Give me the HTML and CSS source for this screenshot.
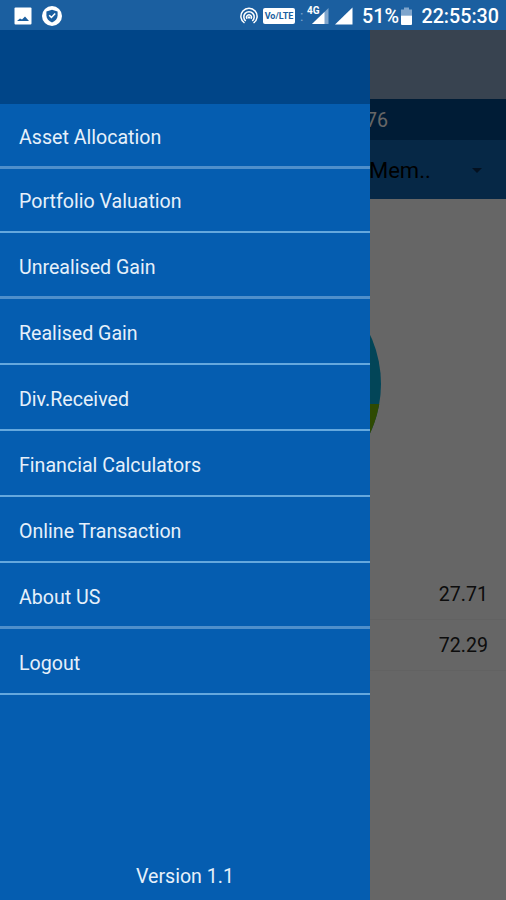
FILE: index.html
```
<!DOCTYPE html>
<html lang="en">
<head>
    <meta charset="UTF-8">
    <meta name="viewport" content="width=device-width, initial-scale=1.0">
    <title>Portfolio</title>
    <link rel="stylesheet" href="styles.css">
</head>
<body>
    <div class="screen">
        <div class="statusbar">
            <svg class="ic-photo" width="18" height="18" viewBox="0 0 18 18">
                <rect x="0.5" y="0.5" width="17" height="17" rx="1" fill="#fff"/>
                <path d="M3 14l3-2.500 2 1 3-3 4 4.500z" fill="#1b5fa0"/>
            </svg>
            <svg class="ic-shield" width="20" height="20" viewBox="0 0 20 20">
                <circle cx="10" cy="10" r="10" fill="#fff"/>
                <path d="M10 3.800l5.600 1.800v3.800c0 3.200-2.400 5.700-5.600 7-3.200-1.300-5.600-3.800-5.600-7V5.600z" fill="#1b5fa0"/>
                <path d="M7.200 9.200l2.200 2.200 3.800-4" fill="none" stroke="#fff" stroke-width="1.500"/>
            </svg>
            <svg class="ic-hotspot" width="18" height="18" viewBox="0 0 18 18">
                <g fill="none" stroke="#fff" stroke-width="1.500">
                    <path d="M4.500 16A8.100 8.100 0 1 1 13.500 16"/>
                    <path d="M5.800 14A5.200 5.200 0 1 1 12.200 14"/>
                    <path d="M7.200 11.800A2.400 2.400 0 1 1 10.800 11.800"/>
                </g>
                <circle cx="9" cy="10.400" r="1.200" fill="#fff"/>
            </svg>
            <span class="volte">Vo/LTE</span>
            <span class="dots">:</span>
            <div class="signal4g">
                <svg width="22" height="18" viewBox="0 0 22 18">
                    <path d="M4 17L20.500 1v16z" fill="#7fa5cc"/>
                    <path d="M4 17L16.500 5v12z" fill="#fff"/>
                </svg>
                <span class="net">4G</span>
            </div>
            <svg class="ic-signal" width="18" height="18" viewBox="0 0 18 18">
                <path d="M0 17.500L17.500 0.500v17z" fill="#fff"/>
            </svg>
            <span class="percent">51%</span>
            <svg class="ic-battery" width="11" height="18" viewBox="0 0 11 18">
                <path d="M3 0.500h5v2h3v6H0v-6h3z" fill="#7fa5cc"/>
                <path d="M0 8.500h11V17a1 1 0 0 1-1 1H1a1 1 0 0 1-1-1z" fill="#fff"/>
            </svg>
            <span class="clock">22:55:30</span>
        </div>

        <div class="page">
            <div class="appbar"></div>
            <div class="total">76</div>
            <div class="member">
                <span>Mem..</span>
                <svg width="12" height="6" viewBox="0 0 12 6"><path d="M1 0h10L6 5z" fill="#0a2c50"/></svg>
            </div>
            <div class="chart">
                <svg width="234" height="234" viewBox="0 0 234 234">
                    <circle cx="117" cy="117" r="117" fill="#05acdc"/>
                    <path d="M117 137H232.300A117 117 0 0 1 117 234z" fill="#75b905"/>
                </svg>
            </div>
            <div class="values">
                <div class="value">27.71</div>
                <div class="value">72.29</div>
            </div>
            <div class="scrim"></div>
        </div>

        <div class="drawer">
            <div class="drawer-head"></div>
            <ul class="menu">
                <li class="first thick">Asset Allocation</li>
                <li class="second">Portfolio Valuation</li>
                <li class="thick">Unrealised Gain</li>
                <li>Realised Gain</li>
                <li>Div.Received</li>
                <li>Financial Calculators</li>
                <li>Online Transaction</li>
                <li class="thick">About US</li>
                <li>Logout</li>
            </ul>
            <div class="version">Version 1.1</div>
        </div>
    </div>
</body>
</html>
```
FILE: styles.css
```
*{
    margin: 0;
    padding: 0;
    box-sizing: border-box;
}
body {
    font-family: Roboto, "Liberation Sans", sans-serif;
    background-color: #666;
}
.screen{
    position: relative;
    width: 506px;
    height: 900px;
    overflow: hidden;
}
.statusbar{
    display: flex;
    align-items: center;
    height: 30px;
    padding: 2px 7px 0 14px;
    background-color: #1b5fa0;
    color: white;
}
.statusbar svg{
    display: block;
    flex-shrink: 0;
}
.ic-shield{
    margin-left: 10px;
}
.ic-hotspot{
    margin-left: 178px;
}
.volte{
    width: 32px;
    height: 16px;
    margin-left: 5px;
    border-radius: 2px;
    background-color: white;
    color: #1b5fa0;
    font-size: 9px;
    font-weight: 700;
    line-height: 17px;
    text-align: center;
}
.dots{
    width: 5px;
    margin-left: 5px;
    color: #7fa5cc;
    font-size: 14px;
}
.signal4g{
    position: relative;
    margin-left: 3px;
}
.net{
    position: absolute;
    top: -1px;
    left: -1px;
    font-size: 10px;
    font-weight: 700;
    line-height: 10px;
}
.ic-signal{
    margin-left: 5px;
}
.percent{
    width: 37px;
    margin-left: 9px;
    font-size: 19.8px;
    font-weight: 500;
    white-space: nowrap;
}
.ic-battery{
    margin-left: 2px;
}
.clock{
    margin-left: auto;
    font-size: 19.7px;
    font-weight: 500;
}
.page{
    position: relative;
    height: 870px;
    background-color: white;
}
.appbar{
    height: 69px;
    background-color: #8ca7c8;
}
.total{
    height: 41px;
    padding-left: 366px;
    background-color: #004687;
    color: white;
    font-size: 19.6px;
    line-height: 44px;
}
.member{
    display: flex;
    justify-content: space-between;
    align-items: center;
    height: 59px;
    padding: 2px 23px 0 369px;
    background-color: #0f64af;
    color: black;
    font-size: 22px;
}
.chart{
    height: 370px;
    padding: 68px 0 0 147px;
}
.values{
    padding-left: 20px;
}
.value{
    height: 51px;
    padding-right: 18px;
    border-bottom: 1px solid #f4f4f4;
    color: #222;
    font-size: 19.6px;
    line-height: 52px;
    text-align: right;
}
.scrim{
    position: absolute;
    inset: 0;
    background-color: rgba(0, 0, 0, 0.6);
}
.drawer{
    position: absolute;
    top: 30px;
    left: 0;
    display: flex;
    flex-direction: column;
    width: 370px;
    height: 870px;
    background-color: #055db0;
    color: #e6f0fa;
}
.drawer-head{
    height: 74px;
    background-color: #004588;
}
.menu{
    list-style: none;
}
.menu li{
    height: 66px;
    padding-left: 19px;
    border-bottom: 2px solid #65a8de;
    font-size: 19.6px;
    line-height: 70px;
}
.menu .first{
    height: 65px;
    line-height: 68px;
}
.menu .second{
    height: 64px;
    line-height: 66px;
}
.menu .thick{
    border-bottom: 3px solid #4f8fcb;
}
.version{
    margin-top: auto;
    height: 48px;
    font-size: 19.6px;
    line-height: 50px;
    text-align: center;
}
```
